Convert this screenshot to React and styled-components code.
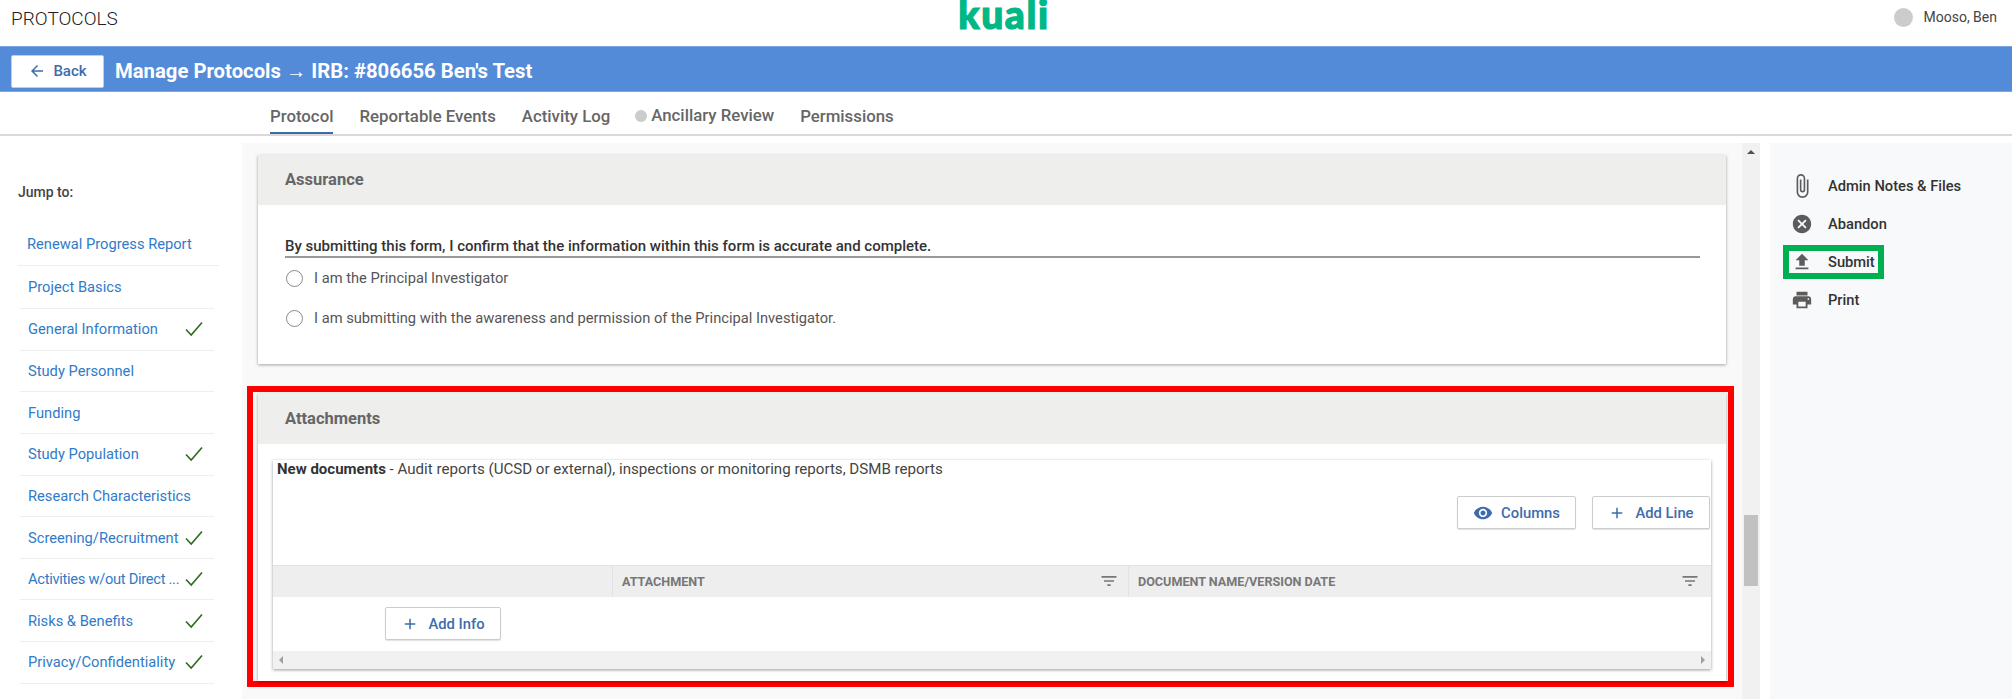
import React from 'react';
import styled, { createGlobalStyle } from 'styled-components';
import { MdAttachFile, MdCancel, MdFileUpload, MdPrint, MdVisibility, MdAdd, MdArrowBack, MdFilterList } from 'react-icons/md';

const Global = createGlobalStyle`
  html, body { margin: 0; padding: 0; height: 100%; background: #fff; overflow: hidden; }
  body { font-family: Roboto, "Liberation Sans", sans-serif; color: #333; }
  * { box-sizing: border-box; }
`;

const Page = styled.div`display: flex; flex-direction: column; height: 699px; overflow: hidden;`;
const TopBar = styled.header`
  height: 46px; display: grid; grid-template-columns: 1fr auto 1fr; align-items: start; padding: 0 15px 0 11px;
`;
const AppName = styled.div`font-size: 19px; font-weight: 300; color: #222; line-height: 37px;`;
const Logo = styled.div`
  font-family: Lato, sans-serif; font-weight: 900; font-size: 39px; line-height: 29px; color: #00b786;
  letter-spacing: 1.6px; height: 30px; -webkit-text-stroke: 1.2px #00b786;
`;
const User = styled.div`display: flex; justify-content: flex-end; align-items: center; gap: 10px; height: 34px; font-size: 14px; color: #444;`;
const Avatar = styled.span`width: 19px; height: 19px; border-radius: 50%; background: #ccc;`;

const BlueBar = styled.div`
  height: 46px; background: #548bd8; border-top: 1px solid #7aa5e2; border-bottom: 1px solid #7aa5e2;
  display: flex; align-items: center; gap: 11px; padding: 4px 0 0 11px;
`;
const BackButton = styled.button`
  width: 93px; height: 33px; background: #fff; border: 1px solid #ccc; border-radius: 2px;
  display: flex; align-items: center; justify-content: center; gap: 7px; color: #3e6cae;
  font: 500 15px Roboto, sans-serif; padding: 0;
`;
const Title = styled.h1`margin: 0; font-size: 20.3px; font-weight: 700; color: #fff; line-height: 28px;`;

const Tabs = styled.nav`
  height: 44px; border-bottom: 2px solid #d9d9d9; display: flex; padding-left: 270px; gap: 26px;
`;
const Tab = styled.a`
  height: 42px; display: flex; align-items: center; gap: 4px; font-size: 16.8px; font-weight: 500; color: #666;
  padding-top: ${p => p.$pt || 8}px; border-bottom: 2px solid ${p => (p.$active ? '#3b6ca8' : 'transparent')};
`;
const Dot = styled.span`width: 12px; height: 12px; border-radius: 50%; background: #ccc; margin: 2px 0 0 -1px;`;

const Body = styled.div`flex: 1; display: flex; padding-top: 7px; min-height: 0;`;
const Side = styled.aside`width: 242px; flex: none; padding: 40px 28px 0 18px;`;
const JumpTitle = styled.div`font-size: 14px; font-weight: 500; color: #444; line-height: 18px; margin-bottom: 21px;`;
const NavRow = styled.a`
  display: flex; align-items: center; justify-content: space-between; font-size: 14.7px; color: #2f7bc9; white-space: nowrap;
  height: ${p => p.$h || '41.65px'}; border-bottom: 1.5px solid #eee;
  margin: ${p => (p.$wide ? '0 -5px 0 0' : '0 0 0 2px')};
  padding: ${p => (p.$wide ? '0 0 0 9px' : '0 11px 0 8px')};
  letter-spacing: ${p => p.$ls || 0}px;
`;

const Main = styled.main`
  width: 1500px; flex: none; background: #f9f9f9; padding: 12px 8px 0 5px; overflow: hidden;
`;
const Card = styled.section`
  background: #fff; box-shadow: 0 1px 3px rgba(0,0,0,.35); display: flex; flex-direction: column;
  height: ${p => p.$h}; margin: ${p => p.$m || '0'};
`;
const CardHead = styled.h2`
  margin: 0; height: ${p => p.$h || '50px'}; background: #eeeeec; padding: 0 0 ${p => p.$pb ?? 2}px 27px; font-size: 16.5px; font-weight: 700; color: #666;
  display: flex; align-items: center; flex: none;
`;
const AssuranceBody = styled.div`padding: 31px 26px 26px 27px;`;
const Statement = styled.div`font-size: 15px; font-weight: 500; color: #333; line-height: 20px; border-bottom: 2px solid #999;`;
const RadioRow = styled.label`height: 40px; display: flex; align-items: center; gap: 11px; font-size: 14.7px; color: #555; padding-left: 1px;`;
const Radio = styled.span`width: 17px; height: 17px; border: 1px solid #888; border-radius: 50%; background: #fff; flex: none;`;

const Highlight = styled.div`border: 6px solid #ff0000; height: 301px; padding: 1px 0 0 5px;`;

const Inner = styled.div`margin: 16px 15px 0; box-shadow: 0 1px 3px rgba(0,0,0,.4); background: #fff; height: 209px; display: flex; flex-direction: column;`;
const InnerText = styled.div`
  font-size: 15.1px; line-height: 19px; color: #444; padding-left: 4px;
  strong { font-size: 15px; font-weight: 700; color: #333; }
`;
const Toolbar = styled.div`display: flex; justify-content: flex-end; gap: 16px; padding: 17px 1px 36px 0;`;
const OutlineButton = styled.button`
  width: ${p => p.$w}px; height: 33px; background: #fff; border: 1px solid #ccc; border-radius: 2px; box-shadow: 0 1px 1px rgba(0,0,0,.12);
  display: flex; align-items: center; justify-content: center; gap: ${p => p.$gap || 9}px; color: #3e6cae;
  font: 500 14.8px Roboto, sans-serif; padding: 0;
`;
const TableHead = styled.div`
  display: grid; grid-template-columns: 339px 516px 1fr; height: 32px; background: #eee; border-top: 1px solid #e2e2e2; flex: none;
`;
const Th = styled.div`
  display: flex; align-items: center; justify-content: space-between; padding: 0 ${p => p.$pr || 9}px 1px 9px; font-size: 12.6px; font-weight: 700; color: #777;
  text-transform: uppercase; border-left: ${p => (p.$first ? 'none' : '1px solid #e2e2e2')};
`;
const TableRow = styled.div`flex: 1; padding: 10px 0 0 112px;`;
const HScroll = styled.div`
  height: 18px; background: #f1f1f1; display: flex; align-items: center; justify-content: space-between; padding: 0 6px; flex: none;
`;
const ArrowLeft = styled.span`width: 0; height: 0; border-top: 4px solid transparent; border-bottom: 4px solid transparent; border-right: 4px solid #a0a0a0;`;
const ArrowRight = styled.span`width: 0; height: 0; border-top: 4px solid transparent; border-bottom: 4px solid transparent; border-left: 4px solid #a0a0a0;`;

const VScroll = styled.div`width: 18px; flex: none; background: #f1f1f1; display: flex; flex-direction: column; align-items: center; padding-top: 7px;`;
const ArrowUp = styled.span`width: 0; height: 0; border-left: 4px solid transparent; border-right: 4px solid transparent; border-bottom: 4px solid #505050;`;
const Thumb = styled.div`width: 14px; height: 71px; background: #c1c1c1; margin-top: 361px;`;

const Actions = styled.aside`flex: 1; margin-left: 10px; background: #f8f9fb; padding: 24px 0 0 13px;`;
const Action = styled.a`
  display: flex; align-items: center; width: 101px; height: 38px; font-size: 14.7px; font-weight: 500; color: #333; white-space: nowrap;
  svg { width: 22px; height: 22px; color: #5c5c5c; flex: none; margin: 0 15px 0 8px; }
`;
const ClipIcon = styled(MdAttachFile)`
  && { width: 26px; height: 26px; margin: 0 13px 0 6px; }
`;
const GreenBox = styled.div`
  width: 101px; height: 34px; border: 6px solid #00b050; margin: 2px 0 2px; display: flex; align-items: center;
  font-size: 14.7px; font-weight: 500; color: #333;
  svg { width: 22px; height: 22px; color: #5c5c5c; flex: none; margin: 0 15px 0 2px; }
`;

const Check = () => (
  <svg width="18" height="16" viewBox="0 0 18 16" fill="none"><path d="M1 8.5 L6.2 14 L17 1.5" stroke="#2e6b1e" strokeWidth="1.6" /></svg>
);

const nav = [
  ['Project Basics', false, '43px'],
  ['General Information', true],
  ['Study Personnel', false],
  ['Funding', false],
  ['Study Population', true],
  ['Research Characteristics', false],
  ['Screening/Recruitment', true],
  ['Activities w/out Direct ...', true, undefined, -0.3],
  ['Risks & Benefits', true],
  ['Privacy/Confidentiality', true],
];

export default function App() {
  return (
    <Page>
      <Global />
      <TopBar>
        <AppName>PROTOCOLS</AppName>
        <Logo>kuali</Logo>
        <User><Avatar />Mooso, Ben</User>
      </TopBar>
      <BlueBar>
        <BackButton><MdArrowBack size={18} />Back</BackButton>
        <Title>Manage Protocols → IRB: #806656 Ben's Test</Title>
      </BlueBar>
      <Tabs>
        <Tab $active>Protocol</Tab>
        <Tab>Reportable Events</Tab>
        <Tab>Activity Log</Tab>
        <Tab $pt={6}><Dot />Ancillary Review</Tab>
        <Tab>Permissions</Tab>
      </Tabs>
      <Body>
        <Side>
          <JumpTitle>Jump to:</JumpTitle>
          <NavRow $wide $h="44px">Renewal Progress Report</NavRow>
          {nav.map(([label, done, h, ls]) => (
            <NavRow key={label} $h={h} $ls={ls}>{label}{done && <Check />}</NavRow>
          ))}
        </Side>
        <Main>
          <Card $h="209px" $m="0 8px 22px 11px">
            <CardHead>Assurance</CardHead>
            <AssuranceBody>
              <Statement>By submitting this form, I confirm that the information within this form is accurate and complete.</Statement>
              <RadioRow><Radio />I am the Principal Investigator</RadioRow>
              <RadioRow><Radio />I am submitting with the awareness and permission of the Principal Investigator.</RadioRow>
            </AssuranceBody>
          </Card>
          <Highlight>
            <Card $h="288px" $m="0 2px 0 0">
              <CardHead $h="51px" $pb={0}>Attachments</CardHead>
              <Inner>
                <InnerText><strong>New documents</strong> - Audit reports (UCSD or external), inspections or monitoring reports, DSMB reports</InnerText>
                <Toolbar>
                  <OutlineButton $w={119} $gap={8}><MdVisibility size={20} />Columns</OutlineButton>
                  <OutlineButton $w={118}><MdAdd size={18} />Add Line</OutlineButton>
                </Toolbar>
                <TableHead>
                  <Th $first />
                  <Th>Attachment<MdFilterList size={20} /></Th>
                  <Th $pr={11}>Document Name/Version Date<MdFilterList size={20} /></Th>
                </TableHead>
                <TableRow>
                  <OutlineButton $w={116}><MdAdd size={18} />Add Info</OutlineButton>
                </TableRow>
                <HScroll><ArrowLeft /><ArrowRight /></HScroll>
              </Inner>
            </Card>
          </Highlight>
        </Main>
        <VScroll><ArrowUp /><Thumb /></VScroll>
        <Actions>
          <Action><ClipIcon />Admin Notes &amp; Files</Action>
          <Action><MdCancel />Abandon</Action>
          <GreenBox><MdFileUpload />Submit</GreenBox>
          <Action><MdPrint />Print</Action>
        </Actions>
      </Body>
    </Page>
  );
}
